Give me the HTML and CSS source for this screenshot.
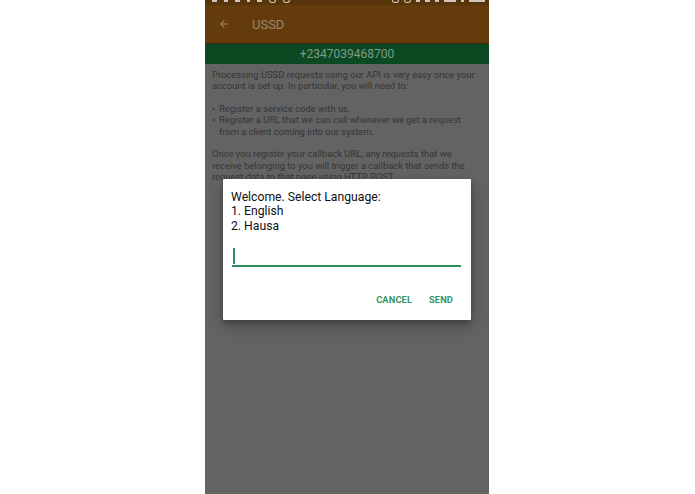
FILE: index.html
```html
<!DOCTYPE html>
<html>
  <head>
    <meta charset="utf-8">
    <meta name="viewport" content="width=device-width, initial-scale=1" />
    <title>USSD</title>
    <link rel="stylesheet" href="styles.css">
  </head>
  <body>
    <div class="phone">
      <div class="status-bar">
        <div class="status-left">
          <span class="glyph w5"></span>
          <span class="glyph w4"></span>
          <span class="glyph w5"></span>
          <span class="glyph w3"></span>
          <span class="glyph w5"></span>
          <span class="glyph ring"></span>
          <span class="glyph ring"></span>
        </div>
        <div class="status-right">
          <span class="glyph ring"></span>
          <span class="glyph ring"></span>
          <span class="glyph w4"></span>
          <span class="glyph w5"></span>
          <span class="glyph w4"></span>
          <span class="glyph w12"></span>
          <span class="glyph w3"></span>
          <span class="glyph w16"></span>
        </div>
      </div>
      <header class="app-bar">
        <svg class="back" width="12" height="12" viewBox="0 0 24 24">
          <path d="M20 11H7.83l5.59-5.59L12 4l-8 8 8 8 1.41-1.41L7.83 13H20v-2z" fill="currentColor"/>
        </svg>
        <span class="title">USSD</span>
      </header>
      <div class="number-bar">+2347039468700</div>
      <main class="content">
        <p>Processing USSD requests using our API is very easy once your account is set up. In particular, you will need to:</p>
        <ul>
          <li>Register a service code with us.</li>
          <li>Register a URL that we can call whenever we get a request from a client coming into our system.</li>
        </ul>
        <p>Once you register your callback URL, any requests that we receive belonging to you will trigger a callback that sends the request data to that page using HTTP POST.</p>
      </main>
      <div class="dialog">
        <div class="message">
          Welcome. Select Language:<br>
          1. English<br>
          2. Hausa
        </div>
        <div class="field">
          <span class="cursor"></span>
        </div>
        <div class="actions">
          <span class="btn">Cancel</span>
          <span class="btn">Send</span>
        </div>
      </div>
    </div>
  </body>
</html>
```

FILE: styles.css
```css
html, body {
  margin: 0;
  height: 100%;
  background: #fff;
}

body {
  display: flex;
  padding-left: 205px;
  font-family: Roboto, "Noto Sans", sans-serif;
}

.phone {
  position: relative;
  width: 284px;
  height: 494px;
  background: #636363;
  overflow: hidden;
  display: flex;
  flex-direction: column;
}

/* Status bar, cut off at the top */
.status-bar {
  height: 5px;
  background: #58340a;
  display: flex;
  justify-content: space-between;
  padding: 0 4px 0 7px;
}
.status-left, .status-right {
  display: flex;
  gap: 7px;
  align-items: flex-start;
}
.status-right {
  gap: 5px;
}
.glyph {
  height: 2px;
  background: #cfc5b8;
}
.glyph.w3 { width: 3px; }
.glyph.w4 { width: 4px; }
.glyph.w5 { width: 5px; }
.glyph.w12 { width: 12px; }
.glyph.w16 { width: 16px; }
.glyph.ring {
  width: 5px;
  height: 2px;
  background: none;
  border: 1px solid #cfc5b8;
  border-top: none;
  border-radius: 0 0 3px 3px;
}

.app-bar {
  height: 38px;
  background: #643b0b;
  display: flex;
  align-items: center;
  padding-left: 13px;
  color: #9c8770;
}
.back {
  display: block;
}
.title {
  margin-left: 22px;
  font-size: 13px;
}

.number-bar {
  height: 20px;
  line-height: 20px;
  background: #0b4922;
  border-top: 1px solid #3a2a0a;
  color: #7f9c87;
  text-align: center;
  font-size: 12px;
}

.content {
  padding: 5px 7px 0 7px;
  color: #353535;
  font-size: 9.4px;
  line-height: 11.3px;
}
.content p {
  margin: 0 0 11.5px;
}
.content ul {
  margin: 0 0 11.5px;
  padding: 0 0 0 7px;
  list-style: none;
}
.content li {
  position: relative;
}
.content li::before {
  content: '\2022';
  position: absolute;
  left: -7px;
}

/* Dialog over the dimmed screen */
.dialog {
  position: absolute;
  left: 18px;
  top: 179px;
  width: 248px;
  height: 141px;
  background: #fff;
  border-radius: 1px;
  box-shadow: 0 6px 14px rgba(0, 0, 0, 0.28), 0 2px 4px rgba(0, 0, 0, 0.2);
  box-sizing: border-box;
  padding: 11px 10px 0 8px;
  display: flex;
  flex-direction: column;
}
.message {
  font-size: 12.2px;
  line-height: 14.3px;
  color: #111;
}
.field {
  margin: 15px 0 0 1px;
  height: 17px;
  border-bottom: 2px solid #2d8f5b;
}
.cursor {
  display: block;
  width: 1.5px;
  height: 16px;
  margin-left: 1px;
  background: #2d8f5b;
}
.actions {
  display: flex;
  justify-content: flex-end;
  gap: 17px;
  margin-top: 27px;
  padding-right: 8px;
}
.btn {
  font-size: 9.3px;
  font-weight: bold;
  text-transform: uppercase;
  color: #359464;
  letter-spacing: 0.1px;
}
```
